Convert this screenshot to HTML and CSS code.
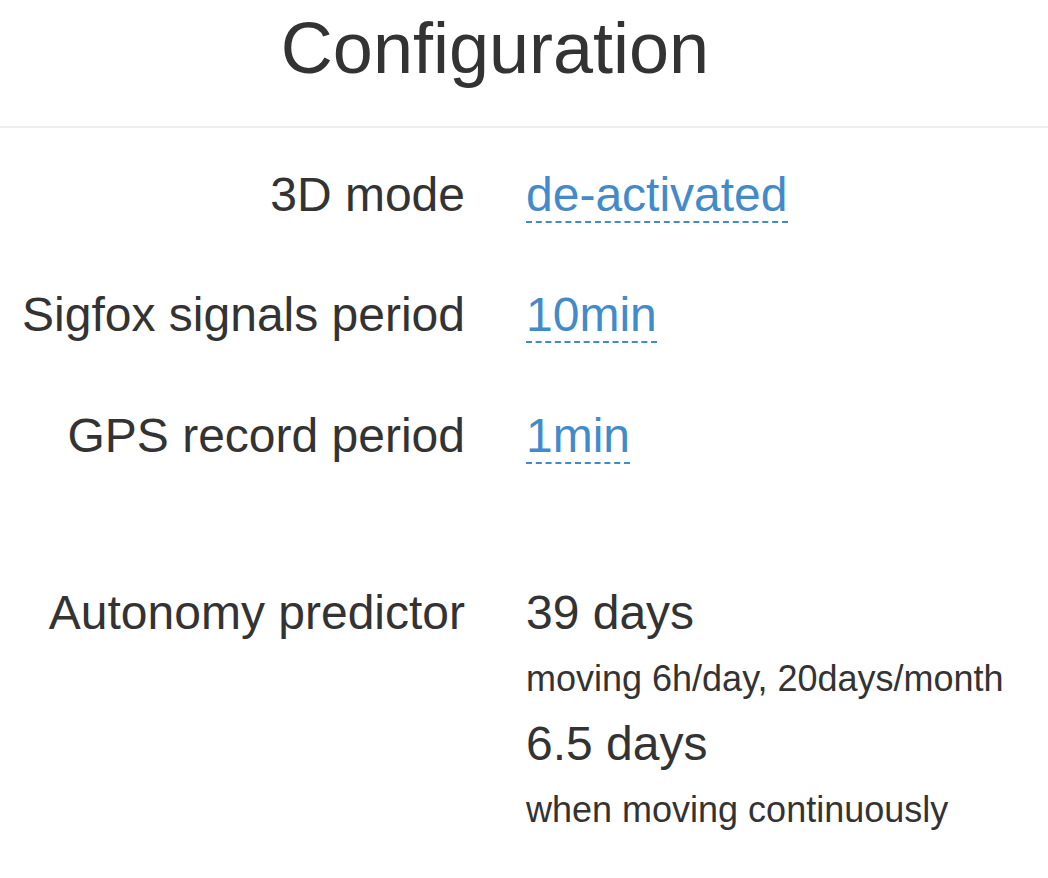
FILE: index.html
```html
<!DOCTYPE html>
<html lang="en">
<head>
<meta charset="utf-8">
<title>Configuration</title>
<link rel="stylesheet" href="styles.css">
</head>
<body>
<div class="page">
  <header class="page-header">
    <h1 class="title">Configuration</h1>
  </header>
  <dl class="config">
    <dt class="label">3D mode</dt>
    <dd class="value"><a class="editable" href="#">de-activated</a></dd>

    <dt class="label">Sigfox signals period</dt>
    <dd class="value"><a class="editable" href="#">10min</a></dd>

    <dt class="label">GPS record period</dt>
    <dd class="value"><a class="editable" href="#">1min</a></dd>

    <dt class="label spacer-row">Autonomy predictor</dt>
    <dd class="value spacer-row">
      <div class="autonomy">
        <div class="big">39 days</div>
        <div class="small">moving 6h/day, 20days/month</div>
        <div class="big">6.5 days</div>
        <div class="small">when moving continuously</div>
      </div>
    </dd>
  </dl>
</div>
</body>
</html>
```

FILE: styles.css
```css
html, body {
  margin: 0;
  padding: 0;
  background: #ffffff;
}

body {
  font-family: "Liberation Sans", Arial, Helvetica, sans-serif;
  color: #333333;
}

.page-header {
  border-bottom: 2px solid #eeeeee;
  padding: 9.4px 58px 37.4px 0;
}

.title {
  margin: 0;
  font-size: 72px;
  font-weight: 400;
  line-height: 1.1;
  text-align: center;
}

.config {
  display: grid;
  grid-template-columns: 465px 1fr;
  column-gap: 61px;
  row-gap: 62.9px;
  margin: 37.6px 0 0 0;
}

.label {
  margin: 0;
  font-size: 48px;
  line-height: 1.2;
  text-align: right;
  white-space: nowrap;
}

.value {
  margin: 0;
  font-size: 48px;
  line-height: 1.2;
}

.spacer-row {
  margin-top: 56.5px;
}

.editable {
  color: #428bca;
  text-decoration: none;
  border-bottom: 2px dashed #428bca;
}

.autonomy {
  display: flex;
  flex-direction: column;
  gap: 15.5px;
}

.big {
  font-size: 48px;
  line-height: 1.2;
}

.small {
  font-size: 36px;
  line-height: 1.2;
}
```
